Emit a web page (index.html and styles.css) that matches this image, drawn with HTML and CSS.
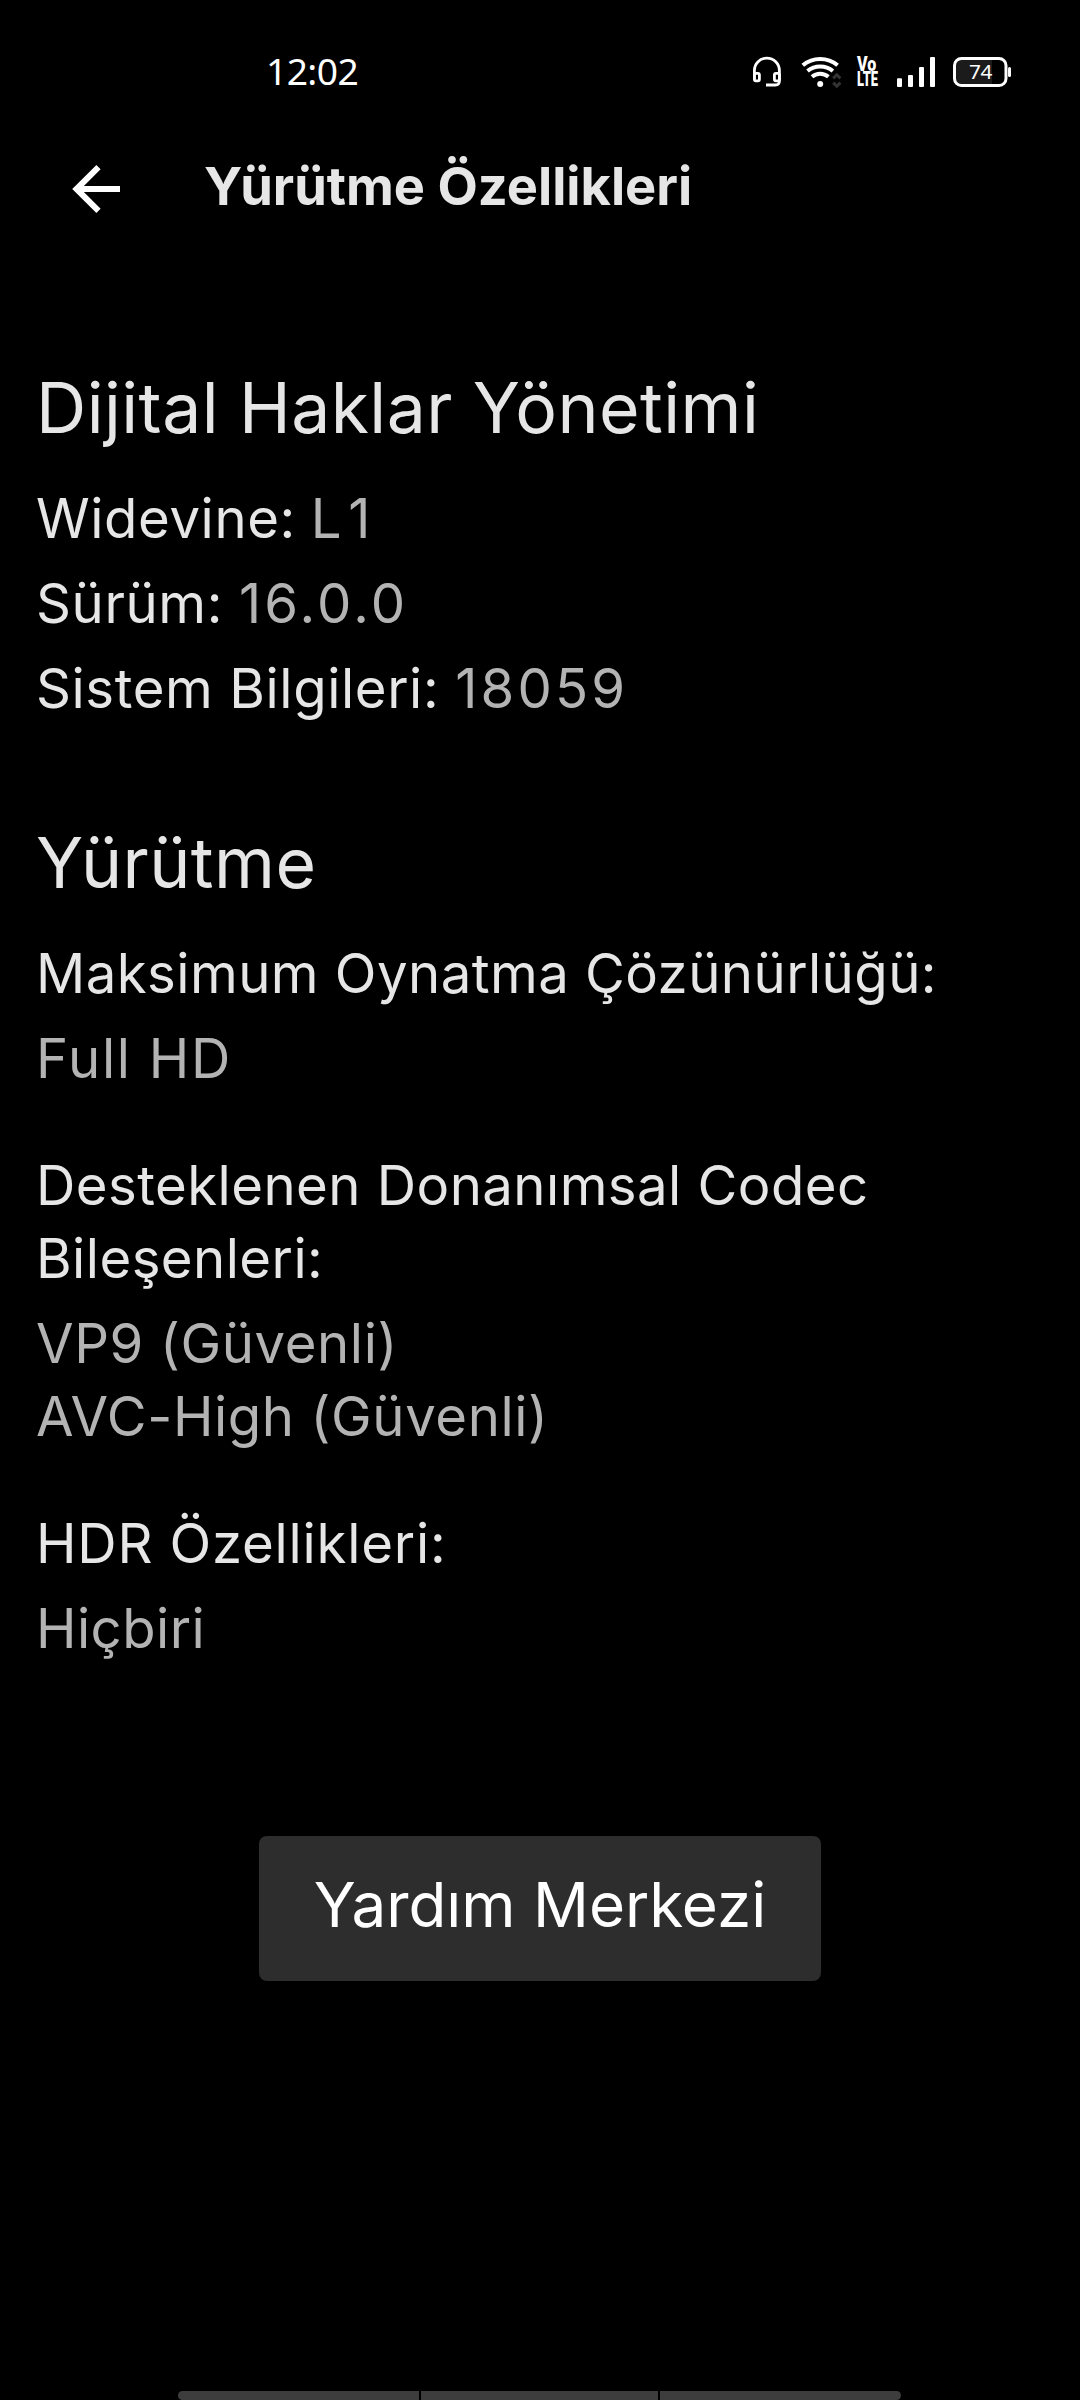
FILE: index.html
```html
<!DOCTYPE html>
<html lang="tr">
<head>
<meta charset="utf-8">
<title>Yürütme Özellikleri</title>
<link rel="stylesheet" href="styles.css">
</head>
<body>
<div class="screen">
  <div class="status-bar">
    <span class="clock">12:02</span>
    <div class="status-icons">
      <svg class="icon-headset" width="30" height="32" viewBox="0 0 30 32" fill="none" stroke="#fff" stroke-width="2.8">
        <path d="M2.4 23V14.6a12.5 12.5 0 0 1 25 0V25q0 4-4 4H14"/>
        <rect x="2.4" y="17.4" width="5" height="7.4" rx="1.5"/>
        <rect x="22.4" y="17.4" width="5" height="7.4" rx="1.5"/>
      </svg>
      <svg class="icon-wifi" width="42" height="32" viewBox="0 0 42 32" fill="none" stroke="#fff" stroke-width="4">
        <path d="M2.8 9.3A27 27 0 0 1 37.6 9.3M7.5 15A20 20 0 0 1 32.9 15M12 20.8A12.5 12.5 0 0 1 28.4 20.8"/>
        <circle cx="20.2" cy="28" r="3" fill="#fff" stroke="none"/>
        <path d="M33.2 22.4l3.6-3.6 3.6 3.6M33.2 26.6l3.6 3.6 3.6-3.6" stroke="#333" stroke-width="3"/>
      </svg>
      <div class="icon-volte"><span class="vo">Vo</span><span class="lte">LTE</span></div>
      <svg class="icon-signal" width="38" height="32" viewBox="0 0 38 32" fill="#fff">
        <rect x="0" y="22.3" width="5" height="8.7" rx="1"/>
        <rect x="11" y="19" width="5" height="12" rx="1"/>
        <rect x="22" y="11" width="5" height="20" rx="1"/>
        <rect x="33" y="1" width="5" height="30" rx="1"/>
      </svg>
      <svg class="icon-battery" width="58" height="32" viewBox="0 0 58 32">
        <path d="M9 2.5H39V29.5H9a6.5 6.5 0 0 1-6.5-6.5V9A6.5 6.5 0 0 1 9 2.5z" fill="#1b1b1b"/>
        <rect x="1.5" y="2.5" width="51.5" height="27" rx="7" fill="none" stroke="#fff" stroke-width="3"/>
        <rect x="55" y="11" width="3" height="10" rx="1.5" fill="#fff"/>
        <text x="27.5" y="23.3" text-anchor="middle" fill="#fff">74</text>
      </svg>
    </div>
  </div>

  <header class="app-bar">
    <svg class="back" width="50" height="50" viewBox="0 0 50 50" fill="none" stroke="#fff" stroke-width="6">
      <path d="M27.5 3.2L5.5 25L27.5 46.800M6 25H49"/>
    </svg>
    <h1>Yürütme Özellikleri</h1>
  </header>

  <main>
    <section>
      <h2>Dijital Haklar Yönetimi</h2>
      <p class="row">Widevine: <span class="value value-level">L1</span></p>
      <p class="row">Sürüm: <span class="value value-number">16.0.0</span></p>
      <p class="row">Sistem Bilgileri: <span class="value value-number">18059</span></p>
    </section>
    <section>
      <h2>Yürütme</h2>
      <div class="group">
        <p>Maksimum Oynatma Çözünürlüğü:</p>
        <p class="value quality">Full HD</p>
      </div>
      <div class="group">
        <p>Desteklenen Donanımsal Codec<br>Bileşenleri:</p>
        <p class="value codecs">VP9 (Güvenli)<br>AVC-High (Güvenli)</p>
      </div>
      <div class="group">
        <p class="hdr">HDR Özellikleri:</p>
        <p class="value">Hiçbiri</p>
      </div>
    </section>
    <button class="help" type="button">Yardım Merkezi</button>
  </main>

  <div class="nav-hint"><i></i><i></i><i></i></div>
</div>
</body>
</html>
```
FILE: styles.css
```css
* { box-sizing: border-box; }
body { margin: 0; background: #000; }
h1, h2, p { margin: 0; }

.screen {
  display: flex;
  flex-direction: column;
  width: 1080px;
  height: 2400px;
  overflow: hidden;
  background: #000;
  color: #e6e6e6;
  font-family: Inter, "Liberation Sans", sans-serif;
}

.status-bar {
  display: flex;
  justify-content: space-between;
  align-items: flex-start;
  height: 140px;
  padding: 46px 69px 0 266px;
  color: #fff;
}
.clock {
  font: 400 37.2px/50px "Noto Sans", sans-serif;
  letter-spacing: -0.6px;
}
.status-icons { display: flex; margin-top: 10px; }
.icon-wifi { margin-left: 18px; }
.icon-volte {
  display: flex;
  flex-direction: column;
  width: 23px;
  height: 32px;
  margin-left: 15px;
  padding-top: 1px;
  font: 900 19.6px/15px Roboto, sans-serif;
}
.vo, .lte { width: max-content; transform-origin: 0 50%; }
.vo { transform: scaleX(0.82); }
.lte { transform: scaleX(0.66); }
.icon-signal { margin-left: 17px; }
.icon-battery { margin-left: 18px; font: 400 20.8px "Noto Sans", sans-serif; letter-spacing: -0.4px; }

.app-bar {
  display: flex;
  align-items: center;
  height: 98px;
  padding-left: 71px;
}
.back { display: block; }
h1 {
  margin: -7px 0 0 83px;
  font-size: 52.4px;
  line-height: 72px;
  font-weight: 700;
}

main {
  display: flex;
  flex-direction: column;
  flex: 1;
  padding: 125px 36px 0;
  font-size: 54.5px;
  line-height: 73px;
  letter-spacing: 0.45px;
}
section + section { margin-top: 93px; }
h2 {
  margin-bottom: 29px;
  font-size: 69.6px;
  line-height: 90px;
  font-weight: 400;
  letter-spacing: 0.45px;
}
.row { letter-spacing: 0.6px; }
.row + .row { margin-top: 12px; }
.group + .group { margin-top: 54px; }
.group .value { margin-top: 12px; }
.value { color: #b3b3b3; }
.value-level { margin-left: -1px; letter-spacing: 9px; }
.value-number { letter-spacing: 3.2px; }
.quality { letter-spacing: 1.7px; }
.codecs { letter-spacing: 0.6px; }
.hdr { letter-spacing: 0.8px; }

.help {
  align-self: center;
  width: 562px;
  height: 145px;
  margin-top: 171px;
  padding: 0 0 8px;
  border: 0;
  border-radius: 8px;
  background: #2d2d2d;
  color: #fff;
  font: 400 61.9px/137px Inter, sans-serif;
  letter-spacing: 0;
}

.nav-hint {
  display: grid;
  grid-template-columns: 241px 237px 241px;
  gap: 2px;
  height: 9px;
  margin-left: 178px;
}
.nav-hint i { background: #3d3d3d; }
.nav-hint i:first-child { border-radius: 5px 0 0 5px; }
.nav-hint i:last-child { border-radius: 0 5px 5px 0; }
```
